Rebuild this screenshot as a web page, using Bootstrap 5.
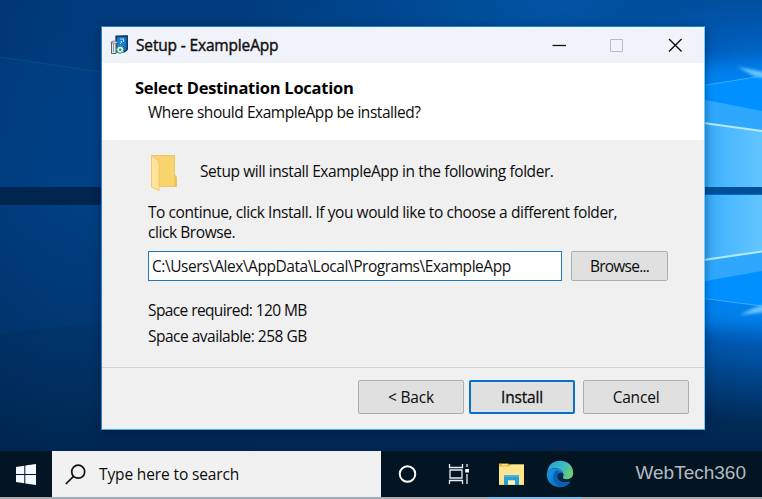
<!DOCTYPE html>
<html lang="en">
<head>
<meta charset="utf-8">
<meta name="viewport" content="width=device-width, initial-scale=1">
<title>Setup - ExampleApp</title>
<link href="https://cdn.jsdelivr.net/npm/bootstrap@5.3.0/dist/css/bootstrap.min.css" rel="stylesheet">
<style>
body{font-family:"Open Sans","Noto Sans",sans-serif;font-size:15.5px;line-height:20px;color:#0c0c0c}
.desktop{width:762px;height:499px;background:#003069}
.wallpaper{z-index:0}
.stage{height:451px;padding:26px 0 0 101px;z-index:1}
.setup-window{width:604px;height:404px;background:#f0f0f0;border:1px solid #1a86d0;border-right-color:#6fd0ff;border-bottom-color:#3fb0f0;box-shadow:0 2px 8px rgba(0,10,40,.45)}
.title-bar{height:36px;background:#f0f4fa;padding-left:8px}
.title-text{font-size:15.5px;letter-spacing:-.16px;-webkit-text-stroke:.4px #111;margin:0 0 0 8px}
.win-controls{margin-right:21px;gap:42px}
.heading-area{height:77px;padding:15px 0 0 33px}
.heading-title{font-weight:700;font-size:16.5px;letter-spacing:-.26px;line-height:20px;color:#000}
.heading-sub{padding-left:13px;line-height:20px;margin-top:4px;letter-spacing:-.45px}
.setup-body{height:227px;padding:13px 36px 0 46px;letter-spacing:-.43px}
.folder-row{height:38px;gap:23px}
.folder-row .fit{margin-top:-2px}
.explain{margin-top:11px}
.path-row{margin-top:9px;gap:9px}
.path-input{width:414px;height:30px;border:1px solid #2079b8;background:#fff;padding:0 3px 1px;border-radius:0;color:#111;font:inherit;letter-spacing:-.46px}
.path-input:focus{outline:0}
.wbtn{--bs-btn-padding-x:0;--bs-btn-padding-y:0;--bs-btn-font-size:15.5px;--bs-btn-line-height:20px;--bs-btn-color:#0c0c0c;--bs-btn-bg:#e0e0e0;--bs-btn-border-color:#adadad;--bs-btn-border-radius:2px}
.browse{width:97px;height:30px;letter-spacing:-.75px}
.space-info{margin-top:16px;line-height:26px;letter-spacing:-.6px}
.space-info .available{letter-spacing:-.5px}
.setup-foot{border-top:1px solid #d4d4d4;padding:12px 15px 0 0;gap:5px}
.fbtn{width:106px;height:34px;letter-spacing:-.2px}
.fbtn.install{--bs-btn-border-color:#0a6fc8;--bs-btn-border-width:2px;-webkit-text-stroke:.3px #111;margin-right:3px}
.taskbar{height:48px;background:#031422;border-bottom:2px solid #a6adb2;z-index:1}
.start{width:52px}
.search-box{width:329px;background:#f1f1f1;padding-left:13px;gap:13px;letter-spacing:-.13px}
.task-icons{padding-left:17px;height:46px}
.explorer{margin-left:19px}
.edge-icon{margin-left:21px}
.watermark{font-family:"Liberation Sans",Arial,sans-serif;font-size:19px;color:#b4bac0;margin-left:auto;margin-right:16px;margin-top:-2px}
.open-app{z-index:2;height:2px;width:94px;left:488px;bottom:0;background:#79bbeb}
.fit{white-space:nowrap}
</style>
<script src="https://cdn.jsdelivr.net/npm/bootstrap@5.3.0/dist/js/bootstrap.bundle.min.js"></script>
</head>
<body class="overflow-hidden">
<div class="desktop position-relative overflow-hidden">
  <svg class="wallpaper position-absolute top-0 start-0" width="762" height="451" viewBox="0 0 762 451" aria-hidden="true">
    <defs>
      <linearGradient id="base" x1="0" y1="0" x2="0" y2="1"><stop offset="0" stop-color="#003b7b"/><stop offset=".4" stop-color="#003f80"/><stop offset=".75" stop-color="#003468"/><stop offset="1" stop-color="#00264f"/></linearGradient>
      <linearGradient id="edge" x1="0" x2="1"><stop offset="0" stop-color="#001c48" stop-opacity=".15"/><stop offset="1" stop-color="#00408a" stop-opacity="0"/></linearGradient>
      <radialGradient id="glow" gradientUnits="userSpaceOnUse" cx="770" cy="190" r="235"><stop offset="0" stop-color="#1ba3ff"/><stop offset=".42" stop-color="#0080f0"/><stop offset=".65" stop-color="#005fbe" stop-opacity=".9"/><stop offset="1" stop-color="#0052a4" stop-opacity="0"/></radialGradient>
      <radialGradient id="top" gradientUnits="userSpaceOnUse" cx="560" cy="0" r="330" gradientTransform="matrix(1 0 0 .45 0 0)"><stop offset="0" stop-color="#0055a5"/><stop offset="1" stop-color="#0054a6" stop-opacity="0"/></radialGradient>
      <linearGradient id="pane" gradientUnits="userSpaceOnUse" x1="704" x2="762" y1="0" y2="0"><stop offset="0" stop-color="#35a8f5"/><stop offset=".4" stop-color="#4cb9ff"/><stop offset="1" stop-color="#62c5ff"/></linearGradient>
      <filter id="soft"><feGaussianBlur stdDeviation="8"/></filter>
      <filter id="haze" x="-30%" y="-50%" width="160%" height="200%"><feGaussianBlur stdDeviation="1.500"/></filter>
      <filter id="thin" x="-5%" width="110%"><feGaussianBlur stdDeviation=".5"/></filter>
    </defs>
    <rect width="762" height="451" fill="url(#base)"/>
    <rect width="110" height="451" fill="url(#edge)"/>
    <path d="M0 57L101 72V187H0Z" fill="#00489a" opacity=".22"/>
    <path d="M0 57L101 72" stroke="#0b5b9e" opacity=".5"/>
    <path d="M0 334L101 322V205H0Z" fill="#00489a" opacity=".16"/>
    <rect y="187" width="102" height="18" fill="#00254f"/>
    <rect width="762" height="160" fill="url(#top)"/>
    <rect x="500" width="262" height="451" fill="url(#glow)"/>
    <path d="M690 66L785 62V330L690 325Z" fill="#0087f5" opacity=".75" filter="url(#soft)"/>
    <path d="M700 86L762 76V112L700 100Z" fill="#0090ff"/>
    <path d="M700 281L762 271V307L700 297Z" fill="#0090ff"/>
    <path d="M700 99L762 111V187H700Z" fill="#2ea7fc"/>
    <path d="M700 195H762V271L700 282Z" fill="#2ea7fc"/>
    <path d="M700 123L762 131V187H700Z" fill="url(#pane)"/>
    <path d="M700 195H762V251L700 260Z" fill="url(#pane)"/>
    <path d="M700 122.500L762 131M700 260.500L762 251.500" stroke="#b5e9ff" stroke-width="2" filter="url(#thin)"/>
    <path d="M700 86L762 76M700 298L762 306" stroke="#38aaff" filter="url(#thin)"/>
    <path d="M738 67L764 72V78L754 76ZM740 315L764 312V305L754 308Z" fill="#6cc6ff" filter="url(#haze)"/>
    <rect x="700" y="187" width="62" height="7.500" fill="#004f98"/>
  </svg>

  <main class="stage position-relative">
    <section class="setup-window d-flex flex-column">
      <header class="title-bar d-flex align-items-center">
        <svg width="18" height="20" viewBox="0 0 18 20" aria-hidden="true">
          <path d="M6 1.200L17.300 .8V14.500L14.500 17H6Z" fill="#1668b4" stroke="#0b2b50" stroke-width="1.200"/>
          <path d="M7.500 2.500H15.500V11H7.500Z" fill="#187fce"/><path d="M10 4H13.500V7M10.500 6.500H12M10 9L12 7" fill="none" stroke="#aee1ff"/>
          <path d="M1.500 7.500H6V18.500H1.500Z" fill="#dde6ed" stroke="#56616c"/><path d="M.7 7.500L3 6L7.500 6.500L6.500 8.500Z" fill="#fff" stroke="#56616c" stroke-width=".8"/><path d="M3.500 9V17" stroke="#8c98a2"/>
          <circle cx="10.200" cy="14.700" r="3.600" fill="#d9f0e7" stroke="#278b84"/><circle cx="10.200" cy="14.700" r="1.300" fill="#2b9c4d"/>
        </svg>
        <span class="title-text fit">Setup - ExampleApp</span>
        <div class="win-controls d-flex align-items-center ms-auto">
          <svg width="16" height="16" viewBox="0 0 16 16"><path d="M1.500 8.500H15" stroke="#111" stroke-width="1.300"/></svg>
          <svg width="16" height="16" viewBox="0 0 16 16"><path d="M1.500 2.500H13.500V14.500H1.500Z" fill="none" stroke="#b9bdc2"/></svg>
          <svg width="16" height="16" viewBox="0 0 16 16"><path d="M2 2L14.600 14.600M14.600 2L2 14.600" stroke="#111" stroke-width="1.400"/></svg>
        </div>
      </header>
      <div class="heading-area bg-white">
        <div class="heading-title"><span class="fit">Select Destination Location</span></div>
        <div class="heading-sub"><span class="fit">Where should ExampleApp be installed?</span></div>
      </div>
      <div class="setup-body">
        <div class="folder-row d-flex align-items-center">
          <svg width="29" height="38" viewBox="0 0 29 38" aria-hidden="true">
            <path d="M4 2.500H26.500V21.500L28.500 24V33.500H9Z" fill="#f9d36e" stroke="#ecc052" stroke-width=".8"/>
            <path d="M3.500 2.500L9.500 7Q11 8.500 11 11V37.800L3.500 34Z" fill="#ffe39a" stroke="#eac35c" stroke-width=".8"/>
            <path d="M26.300 22V33.500H28.500V24.500Z" fill="#f0c050"/>
          </svg>
          <span class="fit">Setup will install ExampleApp in the following folder.</span>
        </div>
        <div class="explain"><span class="fit">To continue, click Install. If you would like to choose a different folder,</span><br><span class="fit">click Browse.</span></div>
        <div class="path-row d-flex">
          <input class="path-input" type="text" value="C:\Users\Alex\AppData\Local\Programs\ExampleApp" aria-label="Destination folder">
          <button class="btn wbtn browse" type="button">Browse...</button>
        </div>
        <div class="space-info"><span class="fit">Space required: 120 MB</span><br><span class="fit available">Space available: 258 GB</span></div>
      </div>
      <footer class="setup-foot d-flex justify-content-end flex-grow-1 align-items-start">
        <button class="btn wbtn fbtn" type="button">&lt; Back</button>
        <button class="btn wbtn fbtn install" type="button">Install</button>
        <button class="btn wbtn fbtn" type="button">Cancel</button>
      </footer>
    </section>
  </main>

  <nav class="taskbar position-relative d-flex">
    <div class="start d-flex align-items-center justify-content-center">
      <svg width="20" height="21" viewBox="0 0 20 21"><path d="M0 3L8.300 1.800V10H0ZM9.300 1.600L20 0V10H9.300ZM0 11H8.300V19.200L0 18ZM9.300 11H20V21L9.300 19.400Z" fill="#f3f8fc"/></svg>
    </div>
    <div class="search-box d-flex align-items-center">
      <svg width="21" height="21" viewBox="0 0 21 21" fill="none" stroke="#111" stroke-width="1.700"><circle cx="13.200" cy="7.700" r="6.500"/><path d="M8.500 12.300L.8 20"/></svg>
      <span class="fit">Type here to search</span>
    </div>
    <div class="task-icons d-flex align-items-center">
      <svg width="20" height="20" viewBox="0 0 20 20"><circle cx="9.500" cy="10" r="7.800" fill="none" stroke="#fff" stroke-width="1.900"/></svg>
      <svg class="ms-4" width="36" height="22" viewBox="0 0 36 22"><g fill="none" stroke="#e8edf1" stroke-width="1.300"><path d="M7.500 1V4.500H20.500V1M7.500 21V17.500H20.500V21M8 7H20V15H8ZM25 1V4M25 11V21"/></g><path d="M23.200 6H27V9.500H23.200Z" fill="#fff"/></svg>
      <svg class="explorer" width="28" height="24" viewBox="0 0 28 24"><path d="M2 1.500H11L13 2.500H27V23H2Z" fill="#f0b53d"/><path d="M2 4.500H12L14 2.500H27V22.500H2Z" fill="#ffe58e"/><path d="M5 2.800H10" stroke="#fff0ae" stroke-width="1.200"/><path d="M7 13H22V23H18V18.500H11V23H7Z" fill="#299fd2"/><path d="M7 13H22V15H7Z" fill="#47b5df"/><path d="M11 18.500H18V22.500H11Z" fill="#fff0b8"/></svg>
      <svg class="edge-icon" width="28" height="28" viewBox="0 0 28 28">
        <defs><linearGradient id="eg" x1="0" x2="1" y1=".2" y2=".6"><stop stop-color="#279fd8"/><stop offset=".55" stop-color="#3dbbc9"/><stop offset="1" stop-color="#70ce6c"/></linearGradient><linearGradient id="eb" x1="0" y1="0" x2="1" y2="1"><stop stop-color="#1895df"/><stop offset="1" stop-color="#0b6bc0"/></linearGradient></defs>
        <path d="M1 13C2 5 7 .8 14 .8C22 .8 27.200 6 27.200 13C27.200 18 23 20 18.500 19C16 18.300 17.500 16.500 17.300 14.500C17 10 11 7 6 8.500C3.500 9.300 2 11 1 13Z" fill="url(#eg)"/>
        <path d="M.8 13.500C2 9.500 6 7.500 10.500 8.300C14.500 9 17.500 11.500 17.300 14.300C16 12 12.500 12.500 11.500 15.500C10.500 20 16 24 24 21.500C20 27 15 28 11 26.800C4 25 .3 20 .8 13.500Z" fill="url(#eb)"/>
        <path d="M9.500 11C5 15 7 24 14 27C19 27.500 22.500 25 24.700 21.700C16 24.500 10.500 20 11.500 15.500C12 13.500 13.500 12.500 14.500 12.500C13 10.500 11 10 9.500 11Z" fill="#0b60b0"/>
        <path d="M17.200 13.500C15 11.700 12 13 11.500 15.800C11.200 19 15 22.500 21 21.800C23 21.500 24.500 20.500 25.300 19.200C22 20.300 19 19.800 17 18.800C16 18 18 16.500 17.200 13.500Z" fill="#062a4c"/>
      </svg>
    </div>
    <span class="watermark fit align-self-center">WebTech360</span>
  </nav>
  <div class="open-app position-absolute"></div>
</div>
</body>
</html>
